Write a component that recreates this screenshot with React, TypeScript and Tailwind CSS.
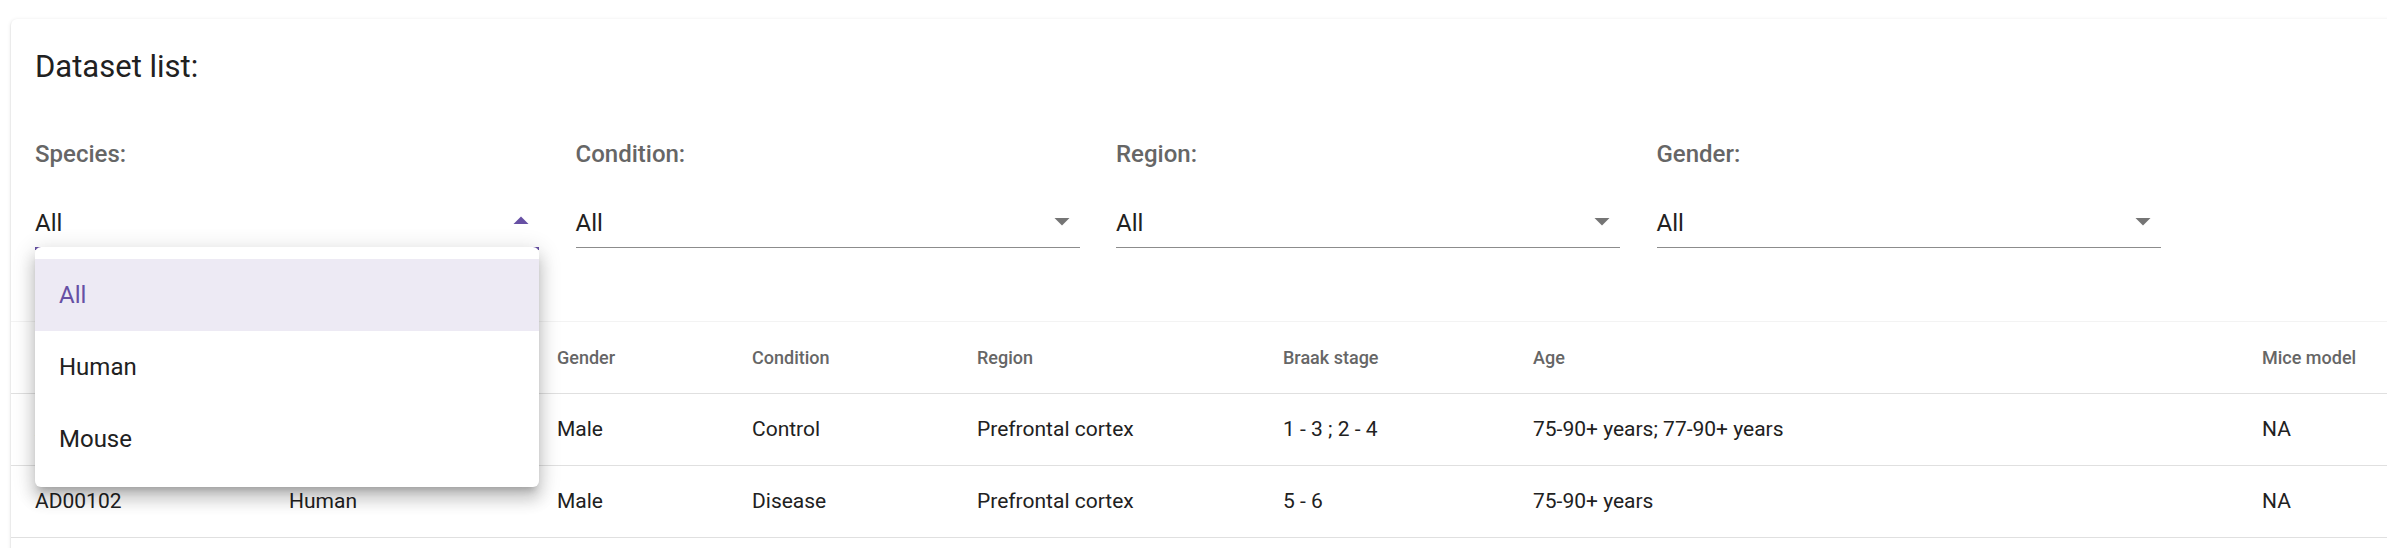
import React from "react";

const filters = ["Species:", "Condition:", "Region:", "Gender:"];

const cols = [
  { key: "id", label: "Dataset ID", w: "w-[254px]" },
  { key: "species", label: "Species", w: "w-[268px]" },
  { key: "gender", label: "Gender", w: "w-[195px]" },
  { key: "condition", label: "Condition", w: "w-[225px]" },
  { key: "region", label: "Region", w: "w-[306px]" },
  { key: "braak", label: "Braak stage", w: "w-[250px]" },
  { key: "age", label: "Age", w: "w-[729px]" },
  { key: "mice", label: "Mice model", w: "w-[200px]" },
];

const rows: Record<string, string>[] = [
  { id: "AD00101", species: "Human", gender: "Male", condition: "Control", region: "Prefrontal cortex", braak: "1 - 3 ; 2 - 4", age: "75-90+ years; 77-90+ years", mice: "NA" },
  { id: "AD00102", species: "Human", gender: "Male", condition: "Disease", region: "Prefrontal cortex", braak: "5 - 6", age: "75-90+ years", mice: "NA" },
];

function Arrow({ up }: { up?: boolean }) {
  return (
    <svg viewBox="0 0 24 24" className="w-[36px] h-[36px]" fill={up ? "#6750A4" : "#757575"}>
      <path d={up ? "M7 14l5-5 5 5z" : "M7 10l5 5 5-5z"} />
    </svg>
  );
}

export default function App() {
  return (
    <div className="w-[2387px] h-[548px] overflow-hidden bg-white font-['Roboto',sans-serif]">
      <div className="pt-[19px] pl-[11px]">
        <div className="w-[2440px] h-[560px] bg-white rounded-[6px] shadow-[0px_3px_1.5px_-1.5px_rgba(0,0,0,0.2),0px_1.5px_1.5px_0px_rgba(0,0,0,0.14),0px_1.5px_4.5px_0px_rgba(0,0,0,0.12)]">
          <div className="px-[24px] pt-[24px]">
            <h2 className="text-[31px] leading-[48px] font-normal text-[#212121]">Dataset list:</h2>
            <div className="mt-[47px] flex gap-[36.5px]">
              {filters.map((f, i) => (
                <div key={f} className="w-[504px]">
                  <div className="text-[24px] leading-[32px] font-medium text-[#666666]">{f}</div>
                  <div className="relative mt-[30px] h-[48px]">
                    <div className="pt-[6px] text-[24px] leading-[34.5px] text-[#212121]">All</div>
                    <div className="absolute right-0 top-[3px]">
                      <Arrow up={i === 0} />
                    </div>
                    {i === 0 ? (
                      <div className="absolute left-0 right-0 bottom-[-1.5px] h-[3px] bg-[#6750A4]" />
                    ) : (
                      <div className="absolute left-0 right-0 bottom-0 h-[1.5px] bg-[#8c8c8c]" />
                    )}
                    {i === 0 && (
                      <div className="absolute left-0 top-[46.5px] w-[504px] z-10 bg-white rounded-[6px] py-[12px] shadow-[0px_7.5px_7.5px_-4.5px_rgba(0,0,0,0.2),0px_12px_15px_1.5px_rgba(0,0,0,0.14),0px_4.5px_21px_3px_rgba(0,0,0,0.12)]">
                        <div className="h-[72px] px-[24px] flex items-center text-[24px] text-[#6750A4] bg-[#EDEAF4]">All</div>
                        <div className="h-[72px] px-[24px] flex items-center text-[24px] text-[#212121]">Human</div>
                        <div className="h-[72px] px-[24px] flex items-center text-[24px] text-[#212121]">Mouse</div>
                      </div>
                    )}
                  </div>
                </div>
              ))}
            </div>
          </div>
          <div className="mt-[73px] border-t border-[#f3f3f3]">
            <div className="flex h-[72px] items-center border-b-[1.5px] border-[#e0e0e0]">
              {cols.map((c) => (
                <div key={c.key} className={`${c.w} shrink-0 px-[24px] text-[18px] font-medium text-[#666666]`}>
                  {c.label}
                </div>
              ))}
            </div>
            {rows.map((r) => (
              <div key={r.id} className="flex h-[72px] items-center border-b-[1.5px] border-[#e0e0e0]">
                {cols.map((c) => (
                  <div key={c.key} className={`${c.w} shrink-0 px-[24px] text-[21px] text-[#212121]`}>
                    {r[c.key]}
                  </div>
                ))}
              </div>
            ))}
          </div>
        </div>
      </div>
    </div>
  );
}
